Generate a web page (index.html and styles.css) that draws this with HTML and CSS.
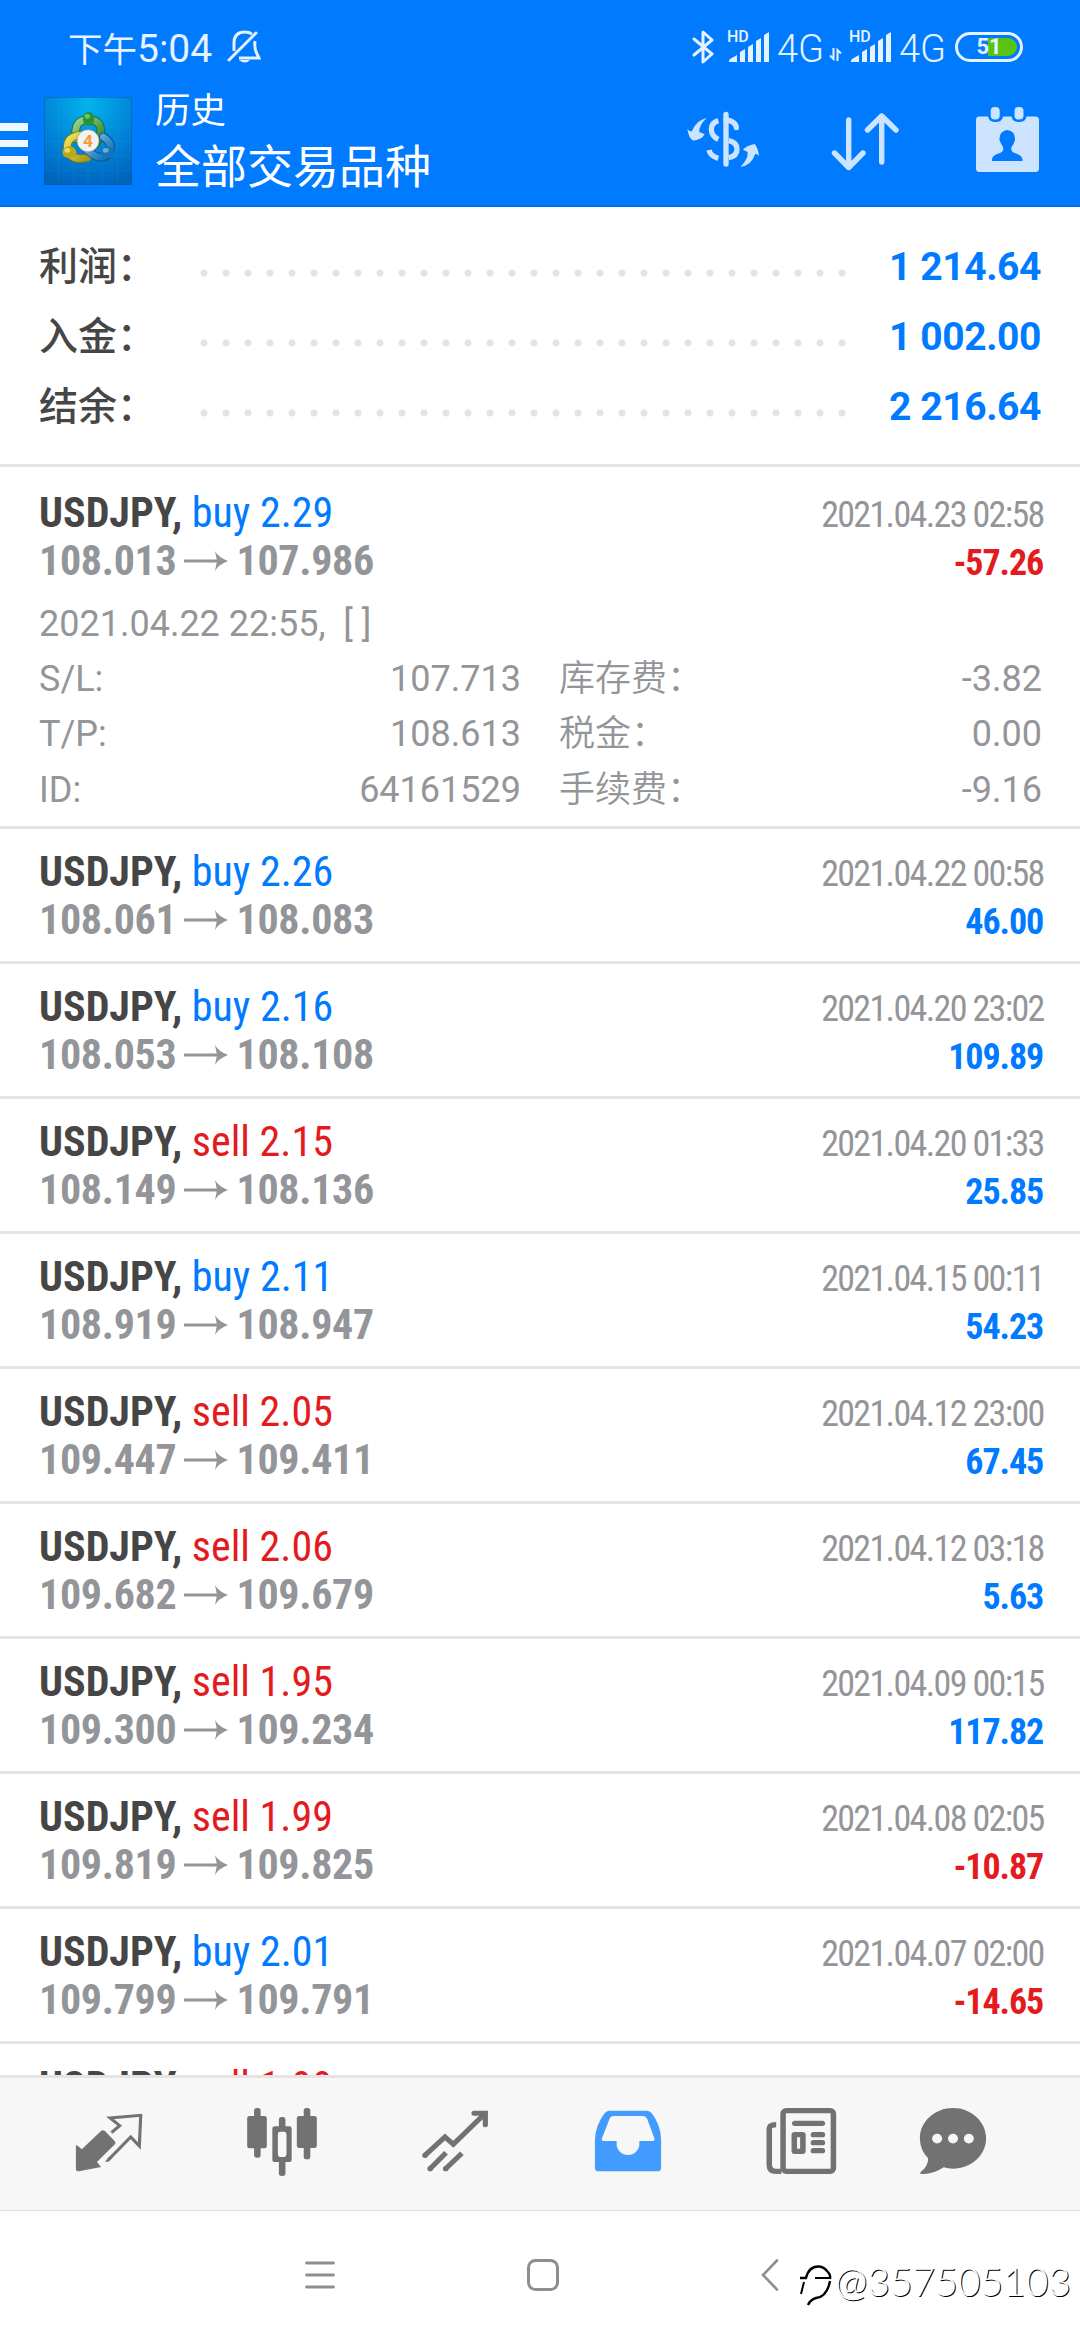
FILE: index.html
```
<!DOCTYPE html>
<html lang="zh-CN">
<head>
<meta charset="utf-8">
<title>历史</title>
<link rel="stylesheet" href="styles.css">
</head>
<body>
<svg class="defs" width="0" height="0">
  <symbol id="arrow" viewBox="0 0 44 24"><path d="M0 12h36" fill="none" stroke="#949599" stroke-width="3"/><path d="M31 2q3 6 13 10q-10 4-13 10l2-10z" fill="#949599"/></symbol>
  <symbol id="signal" viewBox="0 0 41 30"><path fill="#e5f2ff" d="M0 29q0-1 1-2l7-4v7H0zM11 20l5-3v13h-5zM19 15l5-3v18h-5zM27 9l5-3v24h-5zM35 3l5-3v30h-5z"/></symbol>
</svg>

<header class="top">
  <div class="status">
    <div class="clock"><span class="ampm">下午</span>5:04</div>
    <svg class="bell" width="34" height="34" viewBox="0 0 34 34" fill="none" stroke="#e5f2ff" stroke-width="3"><path d="M2 30L29 3" stroke-linecap="round"/><path d="M7 21V13Q7 2 18 2q4 0 7 2M28 11q-1 8 2 13l2 4H12"/><path d="M12 30h11q-5 5-11 0z" fill="#e5f2ff" stroke="none"/></svg>
    <div class="status-right">
      <svg class="bt" width="22" height="36" viewBox="0 0 22 36" fill="none" stroke="#e5f2ff" stroke-width="3" stroke-linejoin="round" stroke-linecap="round"><path d="M2 10l18 15-9 8V3l9 8L2 26"/></svg>
      <div class="sim"><span class="hd">HD</span><svg class="bars" width="41" height="30"><use href="#signal"/></svg></div>
      <span class="net">4G</span>
      <svg class="updown" width="13" height="13" viewBox="0 0 13 13" fill="none" stroke="#e5f2ff" stroke-width="2"><path d="M4.500 0v11L1 7.500M8.500 13V2L12 5.500"/></svg>
      <div class="sim"><span class="hd">HD</span><svg class="bars" width="41" height="30"><use href="#signal"/></svg></div>
      <span class="net net2">4G</span>
      <div class="battery"><i></i><b>51</b></div>
    </div>
  </div>
  <div class="toolbar">
    <div class="menu"><i></i><i></i><i></i></div>
    <svg class="logo" width="88" height="88" viewBox="0 0 264 264">
      <defs>
        <radialGradient id="bg" cx=".5" cy=".08" r=".95"><stop offset="0" stop-color="#00b4ec"/><stop offset=".55" stop-color="#0084d8"/><stop offset="1" stop-color="#0064bd"/></radialGradient>
        <linearGradient id="gr" x2="1" y2="1"><stop offset="0" stop-color="#9bd68d"/><stop offset="1" stop-color="#26802c"/></linearGradient>
        <linearGradient id="ye" x2="1" y2="1"><stop offset="0" stop-color="#f0e65c"/><stop offset="1" stop-color="#a59a18"/></linearGradient>
        <linearGradient id="bl" x2="1" y2="1"><stop offset="0" stop-color="#7cc4ee"/><stop offset="1" stop-color="#0b66ae"/></linearGradient>
      </defs>
      <rect width="264" height="264" fill="url(#bg)"/>
      <path d="M44 0v264M88 0v264M132 0v264M176 0v264M220 0v264M0 44h264M0 88h264M0 132h264M0 176h264M0 220h264" stroke="#5cc4f4" stroke-opacity=".14" stroke-width="2"/>
      <rect x="1" y="1" width="262" height="262" fill="none" stroke="#005a9c" stroke-width="3" stroke-opacity=".6"/>
      <g fill="none" stroke-linecap="round">
        <path d="M97 126Q86 68 134 68Q174 70 170 108Q169 122 156 140" stroke="#23702a" stroke-width="26"/><path d="M97 126Q86 68 134 68Q174 70 170 108Q169 122 156 140" stroke="url(#gr)" stroke-width="20"/>
        <path d="M112 114Q66 118 70 156Q82 194 130 182" stroke="#7d7612" stroke-width="26"/><path d="M112 114Q66 118 70 156Q82 194 130 182" stroke="url(#ye)" stroke-width="20"/>
        <path d="M178 120Q208 138 196 166Q174 200 128 158" stroke="#0b548e" stroke-width="26"/><path d="M178 120Q208 138 196 166Q174 200 128 158" stroke="url(#bl)" stroke-width="20"/>
      </g>
      <ellipse cx="134" cy="66" rx="17" ry="21" fill="#2b9038"/><ellipse cx="130" cy="58" rx="8" ry="7" fill="#8fd78a" opacity=".7"/>
      <ellipse cx="76" cy="166" rx="21" ry="18" fill="#b9a91c"/><ellipse cx="70" cy="160" rx="9" ry="7" fill="#f2ea8c" opacity=".7"/>
      <ellipse cx="190" cy="166" rx="20" ry="18" fill="#1574b8"/><ellipse cx="185" cy="160" rx="9" ry="7" fill="#86c9f0" opacity=".7"/>
      <circle cx="132" cy="131" r="33" fill="#f3f3f3" stroke="#8a9590" stroke-width="2"/>
      <text x="132" y="151" class="logo-4">4</text>
    </svg>
    <div class="titles"><div class="sub">历史</div><div class="main">全部交易品种</div></div>
    <div class="actions">
      <svg width="74" height="58" viewBox="47 48 222 174"><g fill="#cce4ff"><path d="M106 69Q82 92 84 111L100 118Q92 134 66 137Q53 132 48 102Q56 112 62 108Q74 76 106 69z"/><path d="M207 215Q231 194 229 171L215 164Q225 152 250 147Q260 158 263 183Q258 177 252 176Q240 212 207 215z"/></g><g fill="none" stroke="#cce4ff" stroke-width="16"><path d="M164 58V207" stroke-linecap="round"/><path d="M141 77Q120 83 120 103Q121 124 141 133M113 165Q117 183 141 190"/><path d="M164 74Q194 80 195 98" stroke-linecap="round"/><path d="M172 137Q197 142 197 163Q197 184 172 188"/></g></svg>
      <svg width="68" height="60" viewBox="0 0 68 60" fill="none" stroke="#cce4ff" stroke-width="5.400" stroke-linecap="round" stroke-linejoin="round"><path d="M17.700 9v47M3.500 42l14.200 14.500L32 42M50.700 51V5M36.500 19L50.700 5 65 19"/></svg>
      <svg width="63" height="66" viewBox="0 0 63 66" fill="#cce4ff"><path fill-rule="evenodd" d="M3 9.500H12Q13 15 19.500 15Q26 15 27 9.500H35.500Q36.500 15 43 15Q49.500 15 50.500 9.500H59.500Q63 9.500 63 13V61.500Q63 65 59.500 65H3.500Q0 65 0 61.500V13Q0 9.500 3 9.500zM31.300 23Q23 24 23.500 33Q25 37 27 40Q28 45 24 46Q16 48 16 52.500V54H46.500V52.500Q46 48 38.500 46Q34.500 45 35.500 40Q38 37 39 33Q39.500 24 31.300 23z"/><rect x="14.700" y="0" width="9" height="12.500" rx="4"/><rect x="38.500" y="0" width="9" height="12.500" rx="4"/></svg>
    </div>
  </div>
</header>

<section class="summary">
  <div class="sum"><span class="label">利润：</span><i class="dots"></i><b>1 214.64</b></div>
  <div class="sum"><span class="label">入金：</span><i class="dots"></i><b>1 002.00</b></div>
  <div class="sum"><span class="label">结余：</span><i class="dots"></i><b>2 216.64</b></div>
</section>

<main class="deals">
  <article class="deal open">
    <div class="line"><div class="sym">USDJPY, <span class="buy">buy 2.29</span></div><time>2021.04.23 02:58</time></div>
    <div class="line"><div class="price">108.013<svg><use href="#arrow"/></svg>107.986</div><div class="pl sell">-57.26</div></div>
    <div class="opened">2021.04.22 22:55,&nbsp; [ ]</div>
    <div class="grid">
      <span>S/L:</span><span class="r">107.713</span><span>库存费：</span><span class="r">-3.82</span>
      <span>T/P:</span><span class="r">108.613</span><span>税金：</span><span class="r">0.00</span>
      <span>ID:</span><span class="r">64161529</span><span>手续费：</span><span class="r">-9.16</span>
    </div>
  </article>
  <article class="deal">
    <div class="line"><div class="sym">USDJPY, <span class="buy">buy 2.26</span></div><time>2021.04.22 00:58</time></div>
    <div class="line"><div class="price">108.061<svg><use href="#arrow"/></svg>108.083</div><div class="pl buy">46.00</div></div>
  </article>
  <article class="deal">
    <div class="line"><div class="sym">USDJPY, <span class="buy">buy 2.16</span></div><time>2021.04.20 23:02</time></div>
    <div class="line"><div class="price">108.053<svg><use href="#arrow"/></svg>108.108</div><div class="pl buy">109.89</div></div>
  </article>
  <article class="deal">
    <div class="line"><div class="sym">USDJPY, <span class="sell">sell 2.15</span></div><time>2021.04.20 01:33</time></div>
    <div class="line"><div class="price">108.149<svg><use href="#arrow"/></svg>108.136</div><div class="pl buy">25.85</div></div>
  </article>
  <article class="deal">
    <div class="line"><div class="sym">USDJPY, <span class="buy">buy 2.11</span></div><time>2021.04.15 00:11</time></div>
    <div class="line"><div class="price">108.919<svg><use href="#arrow"/></svg>108.947</div><div class="pl buy">54.23</div></div>
  </article>
  <article class="deal">
    <div class="line"><div class="sym">USDJPY, <span class="sell">sell 2.05</span></div><time>2021.04.12 23:00</time></div>
    <div class="line"><div class="price">109.447<svg><use href="#arrow"/></svg>109.411</div><div class="pl buy">67.45</div></div>
  </article>
  <article class="deal">
    <div class="line"><div class="sym">USDJPY, <span class="sell">sell 2.06</span></div><time>2021.04.12 03:18</time></div>
    <div class="line"><div class="price">109.682<svg><use href="#arrow"/></svg>109.679</div><div class="pl buy">5.63</div></div>
  </article>
  <article class="deal">
    <div class="line"><div class="sym">USDJPY, <span class="sell">sell 1.95</span></div><time>2021.04.09 00:15</time></div>
    <div class="line"><div class="price">109.300<svg><use href="#arrow"/></svg>109.234</div><div class="pl buy">117.82</div></div>
  </article>
  <article class="deal">
    <div class="line"><div class="sym">USDJPY, <span class="sell">sell 1.99</span></div><time>2021.04.08 02:05</time></div>
    <div class="line"><div class="price">109.819<svg><use href="#arrow"/></svg>109.825</div><div class="pl sell">-10.87</div></div>
  </article>
  <article class="deal">
    <div class="line"><div class="sym">USDJPY, <span class="buy">buy 2.01</span></div><time>2021.04.07 02:00</time></div>
    <div class="line"><div class="price">109.799<svg><use href="#arrow"/></svg>109.791</div><div class="pl sell">-14.65</div></div>
  </article>
  <article class="deal">
    <div class="line"><div class="sym">USDJPY, <span class="sell">sell 1.99</span></div></div>
  </article>
</main>

<nav class="tabs">
  <svg viewBox="199 216 232 240" preserveAspectRatio="none"><path d="M219 345Q226 347 236 358L292 303Q298 298 304 304L332 334Q336 338 332 343L280 396L292 411L228 424Q219 424 219 416z" fill="#727272"/><path d="M322 308L346 287L318 264L407 256L403 348L378 321L312 391" fill="none" stroke="#727272" stroke-width="9"/><path d="M303 395L318 378L324 384L313 395z" fill="#727272"/></svg>
  <svg viewBox="700 216 232 240" preserveAspectRatio="none" fill="#727272"><rect x="715" y="258" width="57" height="97" rx="7"/><rect x="735" y="234" width="19" height="149" rx="8"/><rect x="859" y="258" width="58" height="96" rx="7"/><rect x="879" y="234" width="19" height="154" rx="8"/><rect x="807" y="261" width="19" height="40" rx="8"/><rect x="807" y="390" width="19" height="48" rx="8"/><path fill-rule="evenodd" d="M796 289H837Q844 289 844 296V389Q844 396 837 396H796Q788 396 788 389V296Q788 289 796 289zM811 305Q804 305 804 315V370Q804 381 811 381H822Q829 381 829 370V315Q829 305 822 305z"/></svg>
  <svg viewBox="1202 216 232 240" preserveAspectRatio="none" fill="none" stroke="#727272" stroke-width="15"><path d="M1230 377L1289 321L1313 343L1403 253"/><path d="M1373 250H1406V284" stroke-linecap="round"/><path d="M1245 417L1292 368M1290 417L1338 370"/><g fill="#727272" stroke="none"><circle cx="1231" cy="376" r="8"/><circle cx="1246" cy="416" r="8"/><circle cx="1291" cy="416" r="8"/></g></svg>
  <svg viewBox="138 216 232 240" preserveAspectRatio="none"><path fill="#429bff" fill-rule="evenodd" d="M158 413V330Q160 285 186 250Q191 242 200 242H308Q318 242 323 250Q349 285 350 330V413Q350 424 339 424H169Q158 424 158 413zM178 326L200 268Q203 258 213 258H296Q306 258 310 268L331 326Q332 333 324 333H287V342A33 33 0 0 1 221 342V333H185Q177 333 178 326z"/></svg>
  <svg viewBox="641 216 232 240" preserveAspectRatio="none" fill="none" stroke="#727272" stroke-width="16"><rect x="705" y="242" width="146" height="182" rx="9"/><path d="M685 284Q665 284 665 297V405Q665 424 685 424H700"/><path d="M739 280H819M793 314H819M793 338H819M793 362H819" stroke-linecap="round"/><rect x="737.500" y="314" width="25" height="50" rx="1"/></svg>
  <svg viewBox="1083 216 232 240" preserveAspectRatio="none"><path fill="#727272" d="M1199 234C1252 234 1295 275 1295 325C1295 376 1252 416 1199 416Q1184 416 1172 412Q1140 434 1108 432Q1100 431 1106 425Q1127 410 1127 385Q1103 361 1103 325C1103 275 1146 234 1199 234z"/><g fill="#f7f7f7"><circle cx="1153" cy="326" r="14.500"/><circle cx="1199" cy="326" r="14.500"/><circle cx="1245" cy="326" r="14.500"/></g></svg>
</nav>

<footer class="system">
  <svg width="32" height="32" viewBox="0 0 32 32" fill="none" stroke="#8e8e8e" stroke-width="2.800" stroke-linecap="round"><path d="M2.500 4H29.500M2.500 16H29.500M2.500 28H29.500"/></svg>
  <svg class="home" width="32" height="32" viewBox="0 0 32 32" fill="none" stroke="#8e8e8e" stroke-width="3"><rect x="1.500" y="1.500" width="29" height="29" rx="7"/></svg>
  <svg class="back" width="18" height="32" viewBox="0 0 18 32" fill="none" stroke="#8e8e8e" stroke-width="2.600" stroke-linecap="round"><path d="M16 1.500L2 16l14 14.500"/></svg>
  <div class="mark"><svg width="34" height="42" viewBox="0 0 34 42" fill="none" stroke="#000"><path d="M1 14h6Q10 2 20 2.500Q25 3 28 7Q32 11 31 15" stroke-width="2.400"/><path d="M5 18L2 30M16 14h16" stroke-width="2"/><path d="M31 17Q28 33 17 34Q11 36 9 41" stroke-width="2.400"/></svg><span>@357505103</span></div>
</footer>
</body>
</html>
```
FILE: styles.css
```
* { box-sizing: border-box; }
body {
  margin: 0;
  width: 1080px;
  height: 2340px;
  overflow: hidden;
  display: flex;
  flex-direction: column;
  background: #fff;
  font-family: Roboto, "Noto Sans CJK SC", sans-serif;
}
svg { display: block; flex: none; }
.defs { position: absolute; }

.top {
  height: 207px;
  flex: none;
  background: #007aff;
  border-bottom: 2px solid #006fe6;
  color: #fff;
}
.status {
  height: 90px;
  padding: 4px 57px 0 68px;
  display: flex;
  align-items: center;
  color: #e5f2ff;
}
.clock { font-size: 39px; line-height: 90px; padding-top: 4px; white-space: nowrap; }
.ampm { font-size: 34.500px; }
.bell { margin-left: 15px; }
.status-right { margin-left: auto; display: flex; align-items: center; height: 90px; }
.bt { margin-right: 15px; }
.sim { position: relative; width: 41px; height: 30px; }
.hd { position: absolute; left: -2px; top: -3px; font-size: 16px; line-height: 16px; font-weight: 500; }
.net { width: 51px; padding: 4px 0 0 7px; font-size: 38px; font-weight: 300; line-height: 90px; letter-spacing: 0; }
.net2 { width: 63px; }
.updown { margin: 14px 9px 0 8px; }
.battery {
  position: relative;
  width: 68px;
  height: 30px;
  border: 3px solid #e5f2ff;
  border-radius: 15px;
}
.battery i { position: absolute; left: 30px; top: 3px; width: 29px; height: 18px; background: #58c313; border-radius: 0 9px 9px 0; }
.battery b { position: absolute; left: 0; right: 0; top: 0; text-align: center; font-size: 22px; line-height: 24px; }

.toolbar { height: 115px; display: flex; align-items: flex-start; }
.menu { width: 28px; padding-top: 33px; display: flex; flex-direction: column; gap: 9px; }
.menu i { height: 7.500px; background: #f0f7ff; }
.logo { margin: 7px 0 0 16px; }
.logo-4 { font: 700 52px Roboto, sans-serif; fill: #f79a32; text-anchor: middle; }
.titles { margin-left: 23px; white-space: nowrap; }
.sub { font-size: 35.500px; line-height: 42px; font-weight: 400; }
.main { font-size: 46px; line-height: 70px; font-weight: 400; }
.actions { margin-left: auto; display: flex; align-items: flex-start; padding: 17px 41px 0 0; }
.actions svg:nth-child(1) { margin: 4px 70px 0 0; }
.actions svg:nth-child(2) { margin: 4px 77px 0 0; }

.summary { height: 260px; flex: none; padding: 25px 39px 0; border-bottom: 3px solid #e4e4e4; }
.sum { display: flex; height: 70px; line-height: 70px; font-size: 39px; align-items: center; color: #464646; }
.label { width: 153.500px; font-weight: 500; }
.dots {
  width: 660px;
  height: 8px;
  margin-top: 12px;
  background: radial-gradient(circle at 11px 4px, #e4e4e4 3.200px, transparent 3.900px) 0 0 / 22px 8px repeat-x;
}
.sum b { margin-left: auto; color: #007aff; letter-spacing: -0.4px; }

.deals { height: 1608px; flex: none; overflow: hidden; }
.deal { height: 135px; padding: 18.500px 38px 0 39px; border-bottom: 3px solid #e4e4e4; font-family: "Roboto Condensed", Roboto, sans-serif; }
.line { display: flex; justify-content: space-between; align-items: baseline; height: 48px; line-height: 48px; white-space: nowrap; }
.sym, .price { font-size: 42px; font-weight: 700; }
.sym { color: #464646; }
.sym span { font-weight: 400; }
.price { display: flex; align-items: center; color: #949599; letter-spacing: -0.3px; }
.price svg { width: 44px; height: 24px; margin: 0 8px; }
time, .pl { font-size: 36px; }
time { color: #949599; letter-spacing: -1.650px; margin-right: -1.650px; }
.pl { font-weight: 700; letter-spacing: -1.100px; margin-right: -1.100px; }
.buy { color: #007aff; }
.sell { color: #e41b1e; }
.open { height: 362px; padding-top: 21.500px; }
.opened, .grid { font-family: Roboto, "Noto Sans CJK SC", sans-serif; font-size: 36px; font-weight: 400; color: #949599; white-space: nowrap; }
.opened { margin-top: 11px; line-height: 56px; }
.grid { display: grid; grid-template-columns: 100px 382px 200px 1fr; grid-auto-rows: 55.500px; line-height: 55.500px; }
.grid span:nth-child(4n + 3) { padding-left: 38px; font-weight: 350; }
.r { text-align: right; }

.tabs {
  height: 136px;
  flex: none;
  display: grid;
  grid-template-columns: repeat(5, 173px) 132px;
  padding: 0 0 4px 22px;
  align-items: center;
  justify-items: center;
  background: #f7f7f7;
  border-top: 3px solid #e4e4e4;
  border-bottom: 1px solid #e0e0e0;
}
.tabs svg { width: 80px; height: 80px; }

.system { position: relative; height: 129px; flex: none; display: flex; padding: 48px 0 0 304px; }
.home { margin-left: 191px; }
.back { margin-left: 202px; }
.mark { position: absolute; left: 799px; top: 53px; display: flex; align-items: flex-start; gap: 2px; }
.mark span {
  margin-top: -7px;
  font: 300 39px/48px Lato, sans-serif;
  color: #fff;
  text-shadow: 1px 1px 0 #000;
}
```
